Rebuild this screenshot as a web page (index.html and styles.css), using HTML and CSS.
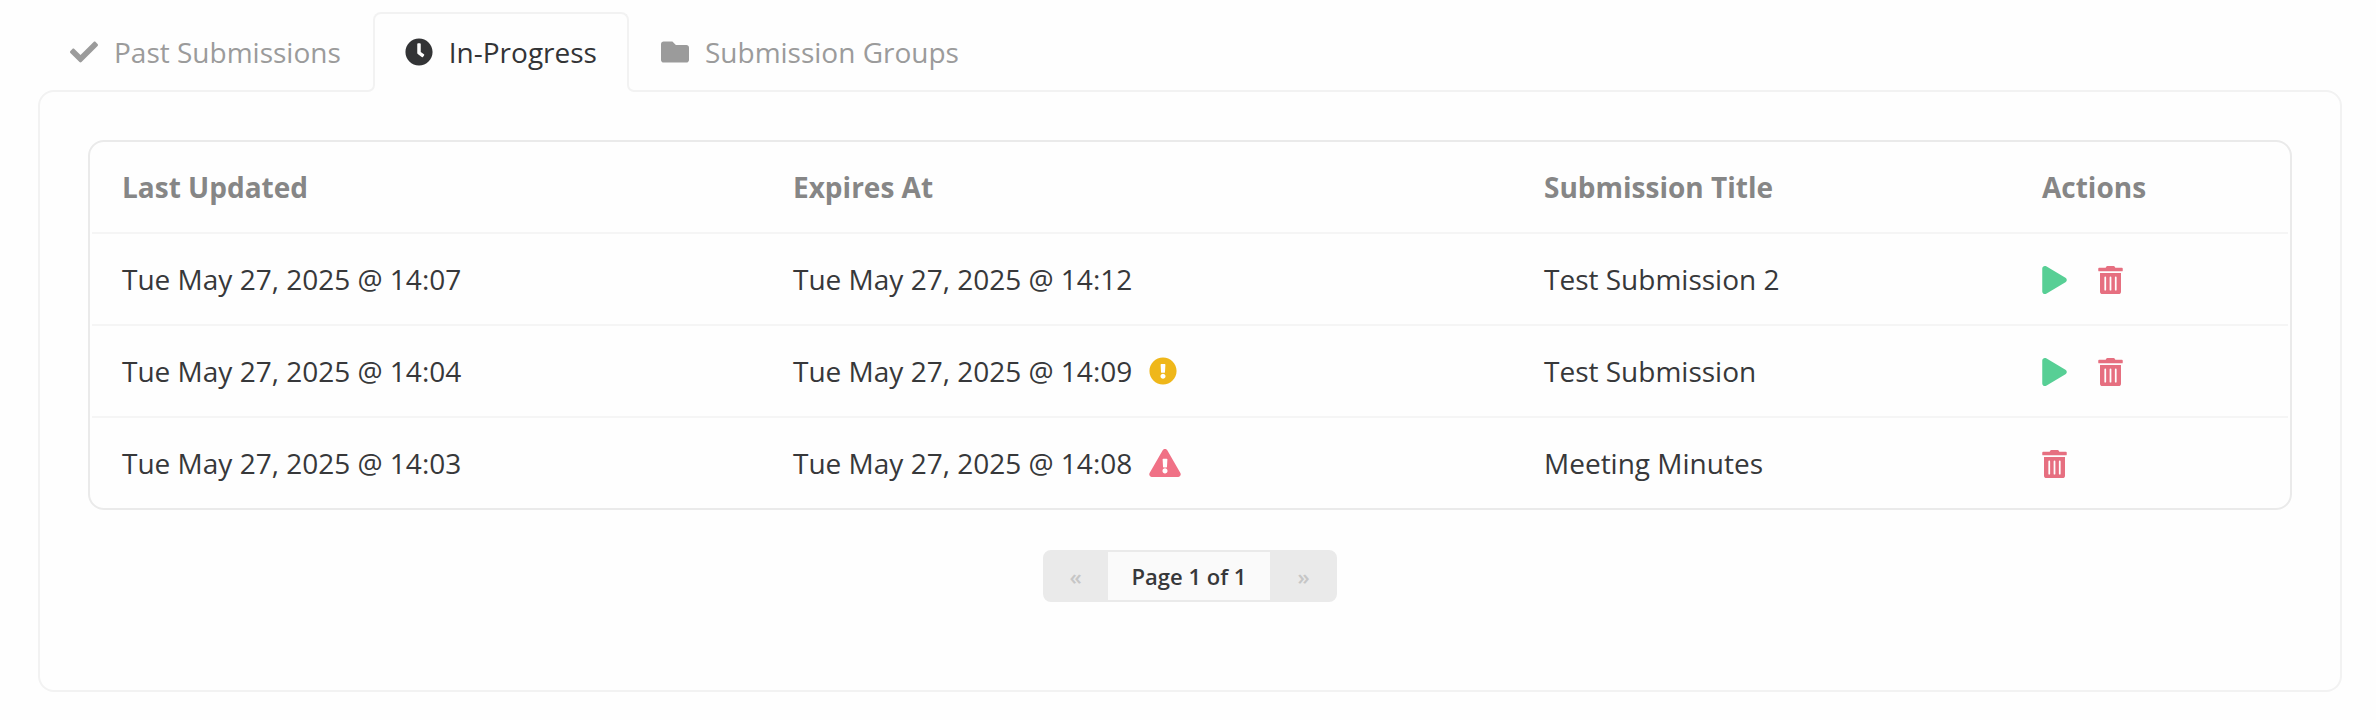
FILE: index.html
```html
<!DOCTYPE html>
<html lang="en">
<head>
<meta charset="utf-8">
<title>Submissions</title>
<link rel="stylesheet" href="styles.css">
</head>
<body>
<svg class="sprite" aria-hidden="true">
  <symbol id="check" viewBox="0 0 512 512"><path d="M173.898 439.404l-166.4-166.4c-9.997-9.997-9.997-26.206 0-36.204l36.203-36.204c9.997-9.998 26.207-9.998 36.204 0L192 312.69 432.095 72.596c9.997-9.997 26.207-9.997 36.204 0l36.203 36.204c9.997 9.997 9.997 26.206 0 36.204l-294.4 294.401c-9.998 9.997-26.207 9.997-36.204-.001z"/></symbol>
  <symbol id="clock" viewBox="0 0 512 512"><path d="M256,8C119,8,8,119,8,256S119,504,256,504,504,393,504,256,393,8,256,8Zm92.49,313h0l-20,25a16,16,0,0,1-22.49,2.5h0l-67-49.72a40,40,0,0,1-15-31.23V112a16,16,0,0,1,16-16h32a16,16,0,0,1,16,16V256l58,42.5A16,16,0,0,1,348.49,321Z"/></symbol>
  <symbol id="folder" viewBox="0 0 512 512"><path d="M464 128H272l-64-64H48C21.49 64 0 85.49 0 112v288c0 26.51 21.49 48 48 48h416c26.51 0 48-21.49 48-48V176c0-26.51-21.49-48-48-48z"/></symbol>
  <symbol id="play" viewBox="0 0 448 512"><path d="M424.4 214.7L72.4 6.6C43.8-10.3 0 6.1 0 47.9V464c0 37.5 40.7 60.1 72.4 41.3l352-208c31.4-18.5 31.5-64.1 0-82.6z"/></symbol>
  <symbol id="trash" viewBox="0 0 448 512"><path d="M32 464a48 48 0 0 0 48 48h288a48 48 0 0 0 48-48V128H32zm272-256a16 16 0 0 1 32 0v224a16 16 0 0 1-32 0zm-96 0a16 16 0 0 1 32 0v224a16 16 0 0 1-32 0zm-96 0a16 16 0 0 1 32 0v224a16 16 0 0 1-32 0zM432 32H312l-9.4-18.7A24 24 0 0 0 281.1 0H166.8a23.72 23.72 0 0 0-21.4 13.3L136 32H16A16 16 0 0 0 0 48v32a16 16 0 0 0 16 16h416a16 16 0 0 0 16-16V48a16 16 0 0 0-16-16z"/></symbol>
  <symbol id="alert-circle" viewBox="0 0 512 512"><path d="M504 256c0 136.997-111.043 248-248 248S8 392.997 8 256C8 119.083 119.043 8 256 8s248 111.083 248 248zm-248 50c-25.405 0-46 20.595-46 46s20.595 46 46 46 46-20.595 46-46-20.595-46-46-46zm-43.673-165.346l7.418 136c.347 6.364 5.609 11.346 11.982 11.346h48.546c6.373 0 11.635-4.982 11.982-11.346l7.418-136c.375-6.874-5.098-12.654-11.982-12.654h-63.383c-6.884 0-12.356 5.78-11.981 12.654z"/></symbol>
  <symbol id="alert-triangle" viewBox="0 0 576 512"><path d="M569.517 440.013C587.975 472.007 564.806 512 527.94 512H48.054c-36.937 0-59.999-40.055-41.577-71.987L246.423 23.985c18.467-32.009 64.72-31.951 83.154 0l239.94 416.028zM288 354c-25.405 0-46 20.595-46 46s20.595 46 46 46 46-20.595 46-46-20.595-46-46-46zm-43.673-165.346l7.418 136c.347 6.364 5.609 11.346 11.982 11.346h48.546c6.373 0 11.635-4.982 11.982-11.346l7.418-136c.375-6.874-5.098-12.654-11.982-12.654h-63.383c-6.884 0-12.356 5.78-11.981 12.654z"/></symbol>
</svg>

<main class="page">
  <nav class="tabs">
    <a class="tab"><svg class="icon"><use href="#check"/></svg>Past Submissions</a>
    <a class="tab tab-active">
      <svg class="flare flare-left" viewBox="0 0 8 8"><path d="M7 0V1A6 6 0 0 1 1 7H0"/></svg>
      <svg class="icon"><use href="#clock"/></svg>In-Progress
      <svg class="flare flare-right" viewBox="0 0 8 8"><path d="M1 0V1A6 6 0 0 0 7 7H8"/></svg>
    </a>
    <a class="tab"><svg class="icon"><use href="#folder"/></svg>Submission Groups</a>
  </nav>

  <section class="panel">
    <div class="card">
      <div class="row row-head"><div>Last Updated</div><div>Expires At</div><div>Submission Title</div><div>Actions</div></div>
      <div class="row">
        <div>Tue May 27, 2025 @ 14:07</div>
        <div>Tue May 27, 2025 @ 14:12</div>
        <div>Test Submission 2</div>
        <div class="actions"><svg class="icon icon-narrow success"><use href="#play"/></svg><svg class="icon icon-narrow danger"><use href="#trash"/></svg></div>
      </div>
      <div class="row">
        <div>Tue May 27, 2025 @ 14:04</div>
        <div class="expiry">Tue May 27, 2025 @ 14:09<svg class="icon warning"><use href="#alert-circle"/></svg></div>
        <div>Test Submission</div>
        <div class="actions"><svg class="icon icon-narrow success"><use href="#play"/></svg><svg class="icon icon-narrow danger"><use href="#trash"/></svg></div>
      </div>
      <div class="row">
        <div>Tue May 27, 2025 @ 14:03</div>
        <div class="expiry">Tue May 27, 2025 @ 14:08<svg class="icon icon-wide error"><use href="#alert-triangle"/></svg></div>
        <div>Meeting Minutes</div>
        <div class="actions"><svg class="icon icon-narrow danger"><use href="#trash"/></svg></div>
      </div>
    </div>

    <div class="pagination">
      <span class="page-step">«</span>
      <span class="page-current">Page 1 of 1</span>
      <span class="page-step page-next">»</span>
    </div>
  </section>
</main>
</body>
</html>
```
FILE: styles.css
```css
* {
  box-sizing: border-box;
}

body {
  margin: 0;
  background: #fefefe;
  color: #37383a;
  font: 28px/40px "Open Sans", sans-serif;
}

.sprite {
  display: none;
}

.page {
  padding: 12px 34px 28px 38px;
}

.tabs {
  display: flex;
  height: 80px;
  padding-left: 2px;
}

.tab {
  display: flex;
  align-items: center;
  padding: 0 32px 0 30px;
  color: #9b9b9b;
  white-space: nowrap;
}

.tab-active {
  position: relative;
  padding: 0 30px 2px;
  border: 2px solid #f2f2f2;
  border-bottom: 0;
  border-radius: 8px 8px 0 0;
  background: #fefefe;
  color: #333436;
}

.tab-active + .tab {
  padding-left: 32px;
}

.tab .icon {
  margin-right: 16px;
}

.flare {
  position: absolute;
  bottom: 0;
  width: 8px;
  height: 8px;
  background: #fefefe;
  fill: none;
  stroke: #f2f2f2;
  stroke-width: 2;
}

.flare-left {
  left: -8px;
}

.flare-right {
  right: -8px;
}

.icon {
  flex: none;
  width: 28px;
  height: 28px;
  fill: currentColor;
}

.icon-narrow {
  width: 25px;
}

.icon-wide {
  width: 32px;
}

.panel {
  height: 602px;
  margin-top: -2px;
  padding: 48px;
  border: 2px solid #f2f2f2;
  border-radius: 16px;
}

.card {
  padding: 0 2px;
  border: 2px solid #eaeaea;
  border-radius: 16px;
}

.row {
  display: grid;
  grid-template-columns: 671px 751px 498px 1fr;
  align-items: center;
  height: 92px;
  padding-left: 30px;
  border-bottom: 2px solid #f5f5f5;
}

.row:last-child {
  height: 90px;
  border-bottom: 0;
}

.row-head {
  color: #868686;
  font-weight: 700;
}

.actions {
  display: flex;
  gap: 31px;
  padding-top: 1px;
}

.expiry {
  display: flex;
  align-items: center;
  gap: 16.5px;
}

.success {
  color: #57cf95;
}

.danger {
  color: #e66f80;
}

.warning {
  color: #efb71a;
}

.error {
  color: #f07186;
}

.pagination {
  display: flex;
  width: 294px;
  height: 52px;
  margin: 40px auto 0;
  border: 2px solid #eaeaea;
  border-radius: 8px;
  background: #eaeaea;
  font-size: 22px;
  line-height: 48px;
  text-align: center;
}

.page-step {
  width: 63px;
  padding-right: 2px;
  color: #c6c6c6;
  font-weight: 600;
}

.page-next {
  width: 65px;
  padding: 0 0 0 2px;
}

.page-current {
  width: 162px;
  background: #fafafa;
  font-weight: 600;
}
```
